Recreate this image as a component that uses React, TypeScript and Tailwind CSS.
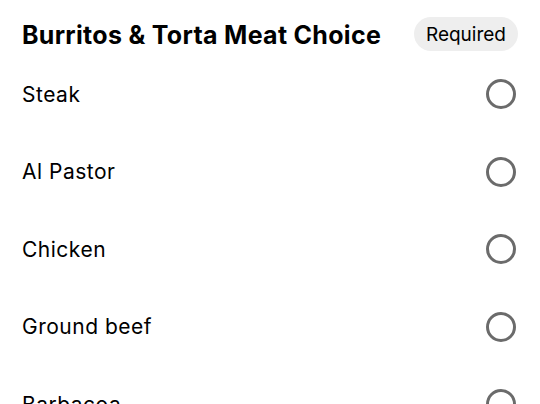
import React from "react";

const items = ["Steak", "Al Pastor", "Chicken", "Ground beef", "Barbacoa"];

export default function App() {
  return (
    <div
      className="w-[540px] h-[404px] overflow-hidden bg-white text-black"
      style={{ fontFamily: "Inter, 'Noto Sans', sans-serif" }}
    >
      <div className="flex items-center justify-between pl-[22px] pr-[22px] pt-[13px] h-[55.5px]">
        <h2 className="text-[25px] font-bold tracking-[0.3px] leading-none pt-[2px]">
          Burritos &amp; Torta Meat Choice
        </h2>
        <span className="h-[34px] px-[12px] rounded-full bg-[#eeeeee] text-[19px] leading-none flex items-center">
          Required
        </span>
      </div>
      {items.map((it) => (
        <div
          key={it}
          className="flex items-center justify-between h-[77.5px] pl-[22px] pr-[24px]"
        >
          <span className="text-[21px] tracking-[0.5px] leading-none">{it}</span>
          <span className="w-[30px] h-[30px] rounded-full border-[3px] border-[#6b6b6b]" />
        </div>
      ))}
    </div>
  );
}
